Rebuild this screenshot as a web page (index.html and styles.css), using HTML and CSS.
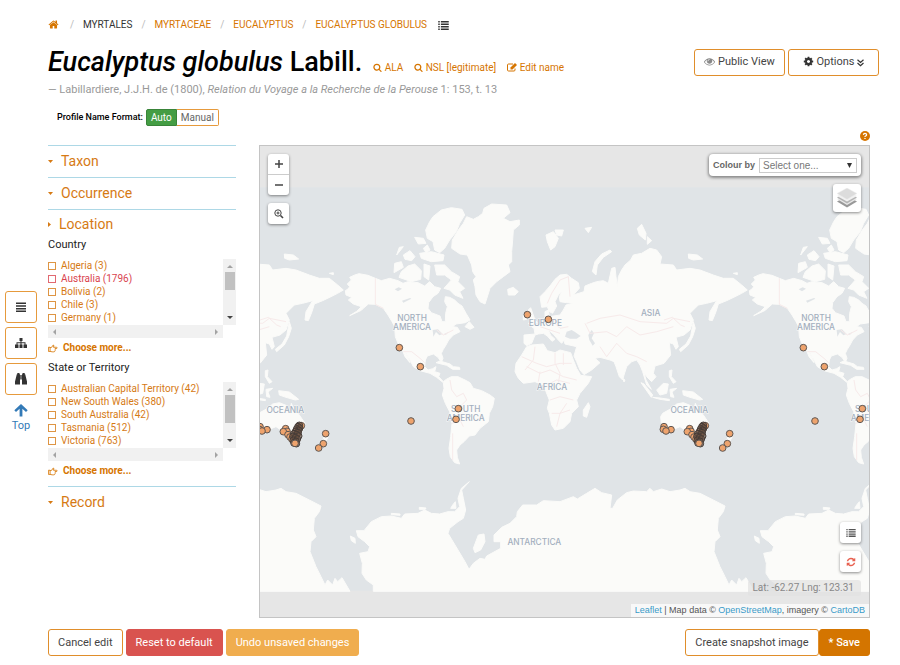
FILE: index.html
```
<!DOCTYPE html>
<html lang="en">
<head>
<meta charset="utf-8">
<title>Eucalyptus globulus Labill.</title>
<link rel="stylesheet" href="styles.css">
</head>
<body>
<svg class="defs" aria-hidden="true">
  <symbol id="i-search" viewBox="0 0 1792 1792"><path d="M1216 832q0-185-131.500-316.500t-316.500-131.500-316.500 131.500-131.500 316.500 131.500 316.500 316.500 131.500 316.500-131.500 131.500-316.500zm512 832q0 52-38 90t-90 38q-54 0-90-38l-343-342q-179 124-399 124-143 0-273.500-55.500t-225-150-150-225-55.500-273.500 55.500-273.500 150-225 225-150 273.500-55.500 273.500 55.500 225 150 150 225 55.500 273.500q0 220-124 399l343 343q37 37 37 90z"/></symbol>
  <symbol id="i-list" viewBox="0 0 14 12"><path d="M0 0h2v2H0zM3.500 0H14v2H3.500zM0 3.300h2v2H0zM3.500 3.300H14v2H3.500zM0 6.600h2v2H0zM3.500 6.600H14v2H3.500zM0 9.900h2v2H0zM3.500 9.900H14v2H3.500z"/></symbol>
  <symbol id="i-hand" viewBox="0 0 12 10"><path d="M.5 3.500h2v5h-2zM2.500 4 4.500 3.500 6 1q1.300-.3 1 1L6.500 3.500H10.500q1.200.8 0 1.500H8.500q1 .8 0 1.500 .6.800-.3 1.300 0 1.200-1.200 1.200H5L2.500 8.500" fill="none" stroke="currentColor"/></symbol>
</svg>
<div class="page">
  <aside class="rail">
    <button type="button" aria-label="Contents"><svg width="10" height="10" viewBox="0 0 10 10"><path d="M0 .5h10v1.500H0zM0 3.200h10v1.500H0zM0 5.900h10v1.500H0zM0 8.500h10V10H0z"/></svg></button>
    <button type="button" aria-label="Classification"><svg width="12" height="10" viewBox="0 0 12 10"><path d="M4.500 0h3v3h-1v1.300h4V6.500H12V10H8.500V6.500h1V5.300h-3v1.200h1V10h-3V6.500h1V5.300h-3v1.200h1V10H0V6.500h1.500V4.300h4V3h-1z"/></svg></button>
    <button type="button" aria-label="Find"><svg width="12" height="12" viewBox="0 0 12 12"><path d="M2.300 0h2.200v1.200H5V11.500H0V8.500L1.800 1.300h.5zM7.500 0h2.200v1.300h.5L12 8.500v3H7V1.200h.5zM5.300 2h1.400v4.500H5.300z"/></svg></button>
    <a class="top" href="#"><svg width="14" height="13" viewBox="0 0 14 13"><path d="M7 0 13.700 6.300 12 8 8.400 4.800V12.500H5.600V4.800L2 8 .3 6.300z"/></svg>Top</a>
  </aside>
  <main class="main">
    <nav class="crumbs" aria-label="Breadcrumb">
      <a class="home" href="#" aria-label="Home"><svg width="11" height="11" viewBox="0 0 1792 1792"><path d="M1472 992v480q0 26-19 45t-45 19h-384v-384h-256v384h-384q-26 0-45-19t-19-45v-480l576-477 575 474zm223-69l-62 74q-8 9-21 11h-3q-13 0-21-7l-692-577-692 577q-12 8-24 7-13-2-21-11l-62-74q-8-10-7-23.500t11-21.500l719-599q32-26 76-26t76 26l244 204v-195q0-14 9-23t23-9h192q14 0 23 9t9 23v408l219 182q10 8 11 21.500t-7 23.500z"/></svg></a>
      <i>/</i><span>MYRTALES</span><i>/</i><a href="#">MYRTACEAE</a><i>/</i><a href="#">EUCALYPTUS</a><i>/</i><a href="#">EUCALYPTUS GLOBULUS</a>
      <svg class="crumb-list" width="11" height="9"><use href="#i-list"/></svg>
    </nav>
    <header class="head">
      <div class="title">
        <h1><em>Eucalyptus globulus</em> Labill.</h1>
        <a href="#"><svg width="9" height="9"><use href="#i-search"/></svg> ALA</a>
        <a href="#"><svg width="9" height="9"><use href="#i-search"/></svg> NSL [legitimate]</a>
        <a href="#"><svg width="10" height="9" viewBox="0 0 10 9"><path d="M6 1H1.500Q.5 1 .5 2v5q0 1 1 1h5.500q1 0 1-1V5.500" fill="none" stroke="currentColor"/><path d="M3.500 6.500V4.500L8 0l2 2-4.500 4.500z"/></svg> Edit name</a>
      </div>
      <div class="actions">
        <button type="button" class="btn"><svg class="dim" width="11" height="11" viewBox="0 0 1792 1792"><path d="M1664 960q-152-236-381-353 61 104 61 225 0 185-131.500 316.500t-316.500 131.500-316.500-131.500-131.500-316.500q0-121 61-225-229 117-381 353 133 205 333.500 326.500t434.500 121.500 434.500-121.500 333.500-326.500zm-720-384q0-20-14-34t-34-14q-125 0-214.500 89.500t-89.500 214.500q0 20 14 34t34 14 34-14 14-34q0-86 61-147t147-61q20 0 34-14t14-34zm848 384q0 34-20 69-140 230-376.500 368.500t-499.500 138.500-499.500-139-376.500-368q-20-35-20-69t20-69q140-229 376.500-368t499.500-139 499.500 139 376.500 368q20 35 20 69z"/></svg> Public View</button>
        <button type="button" class="btn"><svg width="11" height="11" viewBox="0 0 1792 1792"><path d="M1152 896q0-106-75-181t-181-75-181 75-75 181 75 181 181 75 181-75 75-181zm512-109v222q0 12-8 23t-20 13l-185 28q-19 54-39 91 35 50 107 138 10 12 10 25t-9 23q-27 37-99 108t-94 71q-12 0-26-9l-138-108q-44 23-91 38-16 136-29 186-7 28-36 28h-222q-14 0-24.500-8.500t-11.500-21.500l-28-184q-49-16-90-37l-141 107q-10 9-25 9-14 0-25-11-126-114-165-168-7-10-7-23 0-12 8-23 15-21 51-66.500t54-70.500q-27-50-41-99l-183-27q-13-2-21-12.500t-8-23.500v-222q0-12 8-23t19-13l186-28q14-46 39-92-40-57-107-138-10-12-10-24 0-10 9-23 26-36 98.500-107.500t94.500-71.500q13 0 26 10l138 107q44-23 91-38 16-136 29-186 7-28 36-28h222q14 0 24.500 8.500t11.500 21.500l28 184q49 16 90 37l142-107q9-9 24-9 13 0 25 10 129 119 165 170 7 8 7 22 0 12-8 23-15 21-51 66.500t-54 70.500q26 50 41 98l183 28q13 2 21 12.500t8 23.500z"/></svg> Options <svg width="7" height="8" viewBox="0 0 7 8"><path d="M.5.800 3.500 3.500 6.500.800M.5 4 3.500 6.800 6.500 4" fill="none" stroke="currentColor" stroke-width="1.200"/></svg></button>
      </div>
    </header>
    <p class="cite">— Labillardiere, J.J.H. de (1800), <em>Relation du Voyage a la Recherche de la Perouse</em> 1: 153, t. 13</p>
    <div class="format"><span>Profile Name Format:</span><div class="toggle"><button type="button" class="on">Auto</button><button type="button">Manual</button></div></div>
    <div class="help"><svg width="10" height="10" viewBox="0 0 10 10"><circle cx="5" cy="5" r="5"/><path d="M3.400 3.900Q3.500 2.400 5 2.400T6.600 3.800Q6.600 4.500 5.700 5T5 6M5 6.900v1.200" fill="none" stroke="#fff" stroke-width="1.300"/></svg></div>
    <div class="body">
      <section class="facets">
        <h2><svg width="5" height="3" viewBox="0 0 5 3"><path d="M0 0h5L2.500 3z"/></svg>Taxon</h2>
        <h2><svg width="5" height="3" viewBox="0 0 5 3"><path d="M0 0h5L2.500 3z"/></svg>Occurrence</h2>
        <h2 class="open"><svg width="3" height="5" viewBox="0 0 3 5"><path d="M0 0v5l3-2.500z"/></svg>Location</h2>
        <h3>Country</h3>
        <div class="scroller">
          <div class="items">
            <label><input type="checkbox">Algeria (3)</label>
            <label class="hot"><input type="checkbox">Australia (1796)</label>
            <label><input type="checkbox">Bolivia (2)</label>
            <label><input type="checkbox">Chile (3)</label>
            <label><input type="checkbox">Germany (1)</label>
          </div>
          <div class="vbar"><svg class="up" width="6" height="3" viewBox="0 0 6 3"><path d="M0 3h6L3 0z"/></svg><b class="short"></b><svg class="down" width="6" height="3" viewBox="0 0 6 3"><path d="M0 0h6L3 3z"/></svg></div>
          <div class="hbar"><svg width="3" height="6" viewBox="0 0 3 6"><path d="M3 0v6L0 3z"/></svg><svg width="3" height="6" viewBox="0 0 3 6"><path d="M0 0v6l3-3z"/></svg></div>
        </div>
        <a class="more" href="#"><svg width="10" height="9"><use href="#i-hand"/></svg>Choose more...</a>
        <h3>State or Territory</h3>
        <div class="scroller">
          <div class="items">
            <label><input type="checkbox">Australian Capital Territory (42)</label>
            <label><input type="checkbox">New South Wales (380)</label>
            <label><input type="checkbox">South Australia (42)</label>
            <label><input type="checkbox">Tasmania (512)</label>
            <label><input type="checkbox">Victoria (763)</label>
          </div>
          <div class="vbar"><svg class="up" width="6" height="3" viewBox="0 0 6 3"><path d="M0 3h6L3 0z"/></svg><b></b><svg class="down" width="6" height="3" viewBox="0 0 6 3"><path d="M0 0h6L3 3z"/></svg></div>
          <div class="hbar"><svg width="3" height="6" viewBox="0 0 3 6"><path d="M3 0v6L0 3z"/></svg><svg width="3" height="6" viewBox="0 0 3 6"><path d="M0 0v6l3-3z"/></svg></div>
        </div>
        <a class="more" href="#"><svg width="10" height="9"><use href="#i-hand"/></svg>Choose more...</a>
        <h2 class="last"><svg width="5" height="3" viewBox="0 0 5 3"><path d="M0 0h5L2.500 3z"/></svg>Record</h2>
      </section>
      <section class="map" aria-label="Occurrence map">
        <svg class="world" viewBox="-600 -102 1827 1413" preserveAspectRatio="xMidYMid slice">
          <defs>
            <g id="land">
              <path d="M-344 332-336 327-331 320-338 312-326 300-331 292-316 285-303 281-276 286-254 295-236 302-211 295-186 302-171 310-156 305-126 308-106 318-91 305-76 320-58 325-66 340-81 350-94 368-96 385-86 398-60 408-54 425-44 425-43 400-38 380-46 365-44 350-31 352-16 360-6 370 6 378 18 400 30 420 16 428-12 432-22 440-8 442 0 455-20 465-34 480-42 495-50 508-56 520-51 535-56 547-66 532-80 522-98 528-104 540-106 560-96 570-82 566-72 560-76 575-60 580-64 590-50 605-41 598-26 590-6 590 15 600 30 608 40 625 65 632 90 645 103 655 98 680 88 700 85 725 60 745 45 765 28 768 12 785 0 795-10 810-8 832-1 852-16 848-29 830-33 805-28 770-24 730-31 695-44 670-53 645-48 625-50 608-70 592-90 580-120 572-140 560-150 540-162 520-166 514-155 535-150 548-165 530-172 512-182 500-194 470-196 440-204 425-216 405-230 385-254 373-275 372-290 385-296 391-331 407-310 394-296 380-320 372-335 360-325 352-342 345Z"/>
              <path d="M-56 90-26 83 6 88 14 105-1 130-11 155-31 180-46 205-61 218-76 210-81 185-98 175-103 150-91 125-81 110ZM-121 220-86 215-48 225-51 242-86 245-116 235ZM-136 172-110 175-102 190-125 192ZM-182 202-170 200-190 225ZM-170 225-150 212-135 230-145 242-165 238ZM-196 250-176 245-170 262-198 278ZM-176 275-156 258-136 252-116 272-118 298-146 305-183 292ZM-108 252-90 258-94 300-108 290ZM-110 205-98 195-90 210-102 218ZM-76 255-46 255-26 275-1 290-6 305 14 325-1 335 9 355-16 345-31 330-48 325-26 300-46 285-70 285Z"/>
              <path d="M-23 180-5 150 10 130 20 110 40 118 55 110 68 100 72 85 95 72 140 75 150 98 130 115 150 125 178 120 178 135 160 150 158 180 155 215 155 245 145 255 150 275 130 290 110 305 90 325 75 372 60 365 48 345 45 320 40 300 48 290 38 275 35 255 22 225 0 222-25 205ZM143 328 160 322 175 335 165 345 145 345ZM258 165 280 155 295 175 285 200 272 210 262 185ZM285 150 310 150 305 168 290 165ZM375 145 395 142 385 158ZM397 275 405 245 425 222 450 210 455 215 430 232 412 255 408 285ZM532 145 545 133 558 160 556 180 538 165ZM562 170 575 182 562 193ZM685 222 712 225 728 237 700 240 686 235ZM820 280 832 278 832 284ZM-72 548-60 543-30 552-20 560-2 562 0 568-22 568-40 556ZM15 440 28 425 42 442 30 448Z"/>
              <path d="M240 350 255 335 270 318 285 298 300 285 320 283 335 295 355 308 358 325 340 345 372 335 375 318 395 310 410 305 430 302 445 310 455 265 465 262 468 290 472 320 475 290 485 270 495 255 512 240 520 225 545 220 570 205 590 210 605 230 600 252 640 255 650 270 690 265 720 270 760 285 790 295 820 295 845 315 862 330 845 340 825 350 800 362 775 372 768 395 757 422 747 420 750 395 770 362 740 370 715 375 690 400 700 420 690 450 672 465 648 472 655 500 648 508 640 492 628 488 632 525 612 550 585 558 580 580 588 590 575 605 560 590 552 578 558 600 574 628 560 615 548 575 540 555 530 540 515 545 500 560 492 585 488 600 478 590 468 560 462 545 450 540 420 532 405 535 420 548 395 570 372 584 360 570 350 545 342 528 350 500 315 492 312 480 305 490 295 480 280 462 265 450 272 466 285 478 276 484 262 468 250 460 235 462 225 465 215 490 200 497 192 490 192 465 225 462 222 445 215 440 232 432 248 425 255 410 255 395 265 390 268 410 300 405 310 390 318 375 340 370 320 368 300 365 298 350 305 335 295 345 285 365 290 378 278 400 268 395 262 380 245 382Z"/>
              <path d="M205 430 216 424 205 405 205 390 212 383 218 400 225 420 232 428 215 434ZM190 405 203 400 200 418 190 420ZM200 500 215 495 250 492 262 512 285 518 300 510 332 518 340 540 350 565 362 586 395 590 385 610 360 640 350 660 355 680 335 700 330 725 310 745 285 750 275 735 268 700 262 685 268 660 258 635 250 615 225 605 190 610 175 595 165 575 168 550 185 525ZM385 668 390 680 380 712 370 708 370 690ZM489 596 495 600 492 606ZM543 608 552 612 578 645 574 652ZM578 652 600 654 628 658 628 662 600 658ZM590 630 610 610 625 612 620 640 600 645ZM630 628 650 625 636 636 642 652 632 650ZM628 572 636 570 634 590 648 605 640 610 628 590ZM668 632 700 636 728 658 718 660 690 652 670 645ZM700 425 706 445 698 470 685 495 662 515 658 508 678 492 692 468ZM602 710 608 700 635 685 650 672 670 668 690 676 688 690 702 694 706 670 714 688 730 705 747 730 740 752 725 782 705 775 695 755 675 750 660 740 635 750 608 752 604 730ZM712 790 722 790 717 800ZM806 758 817 770 807 788 800 786ZM798 792 804 794 790 808 784 804Z"/>
              <path d="M-260 1234V1215L-281 1200-294 1180-293 1150-301 1120-276 1115-271 1100-286 1085-306 1070-311 1052-288 1052-266 1025-236 1010-206 1008-176 1015-166 1002-126 1000-106 990-86 1000-61 1002-36 995-16 995-1 980-6 955 4 925 28 905 5 930 10 955 17 990 10 1015-6 1025-31 1045-36 1060-6 1110 15 1145 27 1168 40 1150 60 1135 75 1138 80 1128 122 1105 122 1085 102 1085 102 1065 125 1042 150 1030 170 1010 172 995 188 975 230 975 250 962 300 965 340 950 352 957 380 940 405 925 425 938 455 945 450 985 458 985 472 960 500 938 520 933 560 935 570 925 580 935 605 927 630 935 660 930 675 925 690 935 720 940 760 960 795 978 790 995 775 1015 772 1050 780 1070 765 1085 762 1115 780 1160 795 1190 807 1215 815 1200 830 1215 837 1195 845 1205 858 1193 882 1234ZM-329 1068-315 1075-314 1090-326 1082ZM40 1105 55 1065 72 1062 75 1085 62 1110 45 1118ZM-122 982-102 984-104 988-122 988ZM-206 1000-180 1002-180 1006-206 1004ZM-22 975-14 965-12 985-28 985Z"/>
              <g class="lakes"><path d="M315 470 320 455 335 450 345 456 362 468 350 476 330 476ZM385 465 395 450 402 460 395 475 405 490 398 497 388 480ZM-196 328-184 322-174 326-186 334ZM-174 362-150 354-146 356-170 368ZM-82 450-66 448-52 462-62 466-72 456-80 470ZM-48 462-34 456-42 464Z"/></g>
              <path class="borders" d="M-254 295V373L-230 385M-170 515H-145L-120 535-106 548M-70 450-50 465-20 450M-600 420-575 412-550 435-538 440M-30 600-25 630-10 650 10 640 20 660 0 680M-24 730 0 720 10 740M-22 760V840M262 370 275 340 300 300 325 290 330 350M268 410 285 430 300 445 325 440M240 440 270 450 300 460M380 430 420 415 480 405 540 425 620 430 640 415 690 425M375 430 390 460 440 455 470 470 500 440 540 465 590 455 640 440M420 500 440 530 470 490 500 520 530 530 560 545M185 530 230 550 260 560 300 550 335 550M200 560 240 580 270 570 310 590 350 600M225 500 220 540 195 570M285 518V550L300 580 295 610M235 605 240 575M260 615 290 600 330 610M270 660 300 650 340 660M290 740 300 700 330 690M275 700H300L320 670M310 520V555"/>
            </g>
            <g id="names" class="names"><text x="-144" y="424">NORTH</text><text x="-144" y="451">AMERICA</text><text x="17" y="695">SOUTH</text><text x="17" y="723">AMERICA</text><text x="256" y="437">EUROPE</text><text x="572" y="409">ASIA</text><text x="276" y="630">AFRICA</text><text x="688" y="700">OCEANIA</text><text x="223" y="1095">ANTARCTICA</text></g>
            <g id="pins" class="pins"><circle cx="-182" cy="503" r="10"/><circle cx="-119" cy="560" r="10"/><circle cx="-5" cy="686" r="10"/><circle cx="-12" cy="718" r="10"/><circle cx="-147" cy="723" r="10"/><circle cx="202" cy="404" r="10"/><circle cx="265" cy="418" r="10"/><circle cx="809" cy="761" r="10"/><circle cx="802" cy="791" r="10"/><circle cx="788" cy="804" r="10"/><circle cx="612" cy="740" r="10"/><circle cx="633" cy="749" r="10"/><circle cx="610" cy="748" r="10"/><circle cx="618" cy="753" r="10"/><circle cx="736" cy="737" r="10"/><circle cx="689" cy="746" r="10"/><circle cx="693" cy="754" r="10"/><circle cx="682" cy="755" r="10"/><circle cx="696" cy="764" r="10"/><circle cx="702" cy="771" r="10"/><circle cx="708" cy="778" r="10"/>
              <g class="dense"><circle cx="730" cy="736" r="10"/><circle cx="726" cy="740" r="10"/><circle cx="731" cy="744" r="10"/><circle cx="722" cy="747" r="10"/><circle cx="728" cy="751" r="10"/><circle cx="719" cy="754" r="10"/><circle cx="726" cy="758" r="10"/><circle cx="714" cy="761" r="10"/><circle cx="722" cy="764" r="10"/><circle cx="728" cy="768" r="10"/><circle cx="711" cy="769" r="10"/><circle cx="718" cy="773" r="10"/><circle cx="724" cy="777" r="10"/><circle cx="712" cy="781" r="10"/><circle cx="720" cy="784" r="10"/><circle cx="714" cy="789" r="10"/><circle cx="721" cy="791" r="10"/></g><circle cx="717" cy="790" r="10"/></g>
          </defs>
          <rect class="sea" x="-2400" y="22" width="5400" height="1210"/>
          <g class="land"><use href="#land" x="-1212"/><use href="#land"/><use href="#land" x="1212"/></g>
          <use href="#names" x="-1212"/><use href="#names"/><use href="#names" x="1212"/>
          <use href="#pins" x="-1212"/><use href="#pins"/><use href="#pins" x="1212"/>
        </svg>
        <div class="corner top-left">
          <div class="box zoom"><button type="button" aria-label="Zoom in"><svg width="8" height="8" viewBox="0 0 8 8"><path d="M0 4h8M4 0v8" stroke="#444" stroke-width="1.500"/></svg></button><button type="button" aria-label="Zoom out"><svg width="8" height="8" viewBox="0 0 8 8"><path d="M0 4h8" stroke="#444" stroke-width="1.500"/></svg></button></div>
          <button type="button" class="box" aria-label="Zoom to points"><svg width="10" height="10" viewBox="0 0 10 10"><g fill="none" stroke="#444"><circle cx="4" cy="4" r="3.200"/><path d="M2.500 4h3M4 2.500v3"/><path d="M6.500 6.500 9 9" stroke-width="1.600"/></g></svg></button>
        </div>
        <div class="corner top-right">
          <div class="colour"><label for="colour">Colour by</label><div class="select"><select id="colour"><option>Select one...</option></select><svg width="5" height="5" viewBox="0 0 5 5"><path d="M0 0h5L2.500 5z"/></svg></div></div>
          <button type="button" class="box layers" aria-label="Layers"><svg width="22" height="20" viewBox="0 0 22 20"><path d="M11 8 21 13.500 11 19.500 1 13.500z" fill="#999"/><path d="M11 5.500 21 11 11 17 1 11z" fill="#e8e8e8"/><path d="M11 4 21 9.500 11 15.500 1 9.500z" fill="#b5b5b5"/><path d="M11 2.500 21 8 11 13.500 1 8z" fill="#f1f1f1"/><path d="M11 0 21 5.500 11 11.500 1 5.500z" fill="#dcdcdc" stroke="#eee" stroke-width=".5"/></svg></button>
        </div>
        <div class="corner bottom-right">
          <button type="button" class="box legend" aria-label="Legend"><svg width="10" height="8"><use href="#i-list"/></svg></button>
          <button type="button" class="box refresh" aria-label="Refresh"><svg width="10" height="10" viewBox="0 0 1792 1792"><path d="M1639 1056q0 5-1 7-64 268-268 434.500t-478 166.500q-146 0-282.500-55t-243.500-157l-129 129q-19 19-45 19t-45-19-19-45v-448q0-26 19-45t45-19h448q26 0 45 19t19 45-19 45l-137 137q71 66 161 102t187 36q134 0 250-65t186-179q11-17 53-117 8-23 30-23h192q13 0 22.500 9.500t9.500 22.500zm25-800v448q0 26-19 45t-45 19h-448q-26 0-45-19t-19-45 19-45l138-138q-148-137-349-137-134 0-250 65t-186 179q-11 17-53 117-8 23-30 23h-199q-13 0-22.500-9.500t-9.500-22.500v-7q65-268 270-434.500t480-166.500q146 0 284 55.500t245 156.500l130-129q19-19 45-19t45 19 19 45z"/></svg></button>
          <div class="coords">Lat: -62.27 Lng: 123.31</div>
        </div>
        <div class="credit"><a href="#">Leaflet</a> | Map data © <a href="#">OpenStreetMap</a>, imagery © <a href="#">CartoDB</a></div>
      </section>
    </div>
    <footer class="foot">
      <button type="button" class="btn">Cancel edit</button>
      <button type="button" class="btn red">Reset to default</button>
      <button type="button" class="btn amber">Undo unsaved changes</button>
      <div class="group"><button type="button" class="btn">Create snapshot image</button><button type="button" class="btn save">* Save</button></div>
    </footer>
  </main>
</div>
</body>
</html>
```
FILE: styles.css
```
* { box-sizing: border-box; }
body { margin: 0; background: #fff; color: #333; font: 11px/16px Roboto, "Liberation Sans", sans-serif; }
svg { fill: currentColor; flex: none; }
a { color: #d67500; text-decoration: none; }
button { font: inherit; color: inherit; padding: 0; cursor: pointer; }
h1, h2, h3, p { margin: 0; font-weight: 400; }
.defs { position: absolute; width: 0; height: 0; }
.page { display: flex; }

.rail { width: 48px; padding: 291px 0 0 5px; display: flex; flex-direction: column; gap: 4px; flex: none; }
.rail button { width: 32px; height: 32px; display: flex; align-items: center; justify-content: center; background: #fff; border: 1px solid #e69a3c; border-radius: 3px; }
.top { width: 32px; padding-top: 5px; display: flex; flex-direction: column; align-items: center; color: #337ab7; line-height: 18px; }

.main { flex: 1; min-width: 0; padding: 16px 21px 8px 0; }
.crumbs { display: flex; align-items: center; height: 18px; font-size: 10px; }
.crumbs a { display: flex; }
.crumbs .home { padding: 0 2px 1px 0; }
.crumbs i { width: 22px; text-align: center; font-style: normal; color: #bbb; }
.crumb-list { margin-left: 11px; }
.head { display: flex; justify-content: space-between; align-items: center; height: 48px; margin-top: 4px; }
.title { display: flex; align-items: baseline; gap: 11px; font-size: 10px; }
h1 { font-size: 27px; line-height: 32px; font-weight: 500; color: #000; }
.title a svg { vertical-align: -1px; }
.actions { display: flex; gap: 3px; }
.actions .btn { width: 91px; }
.btn { height: 27px; padding: 0 9px; background: #fff; border: 1px solid #e08e2b; border-radius: 3px; white-space: nowrap; color: #444; }
.btn svg { vertical-align: -2px; color: #333; }
.btn .dim { color: #888; }
.cite { margin-top: -4px; color: #999; }
.format { display: flex; align-items: center; gap: 3px; height: 18px; margin: 10px 0 0 9px; font-size: 9px; color: #000; font-weight: 500; }
.toggle { display: flex; font-size: 10px; font-weight: 400; color: #666; }
.toggle button { height: 17px; padding: 0 4px; border: 1px solid #e69a3c; border-left: 0; border-radius: 0 2px 2px 0; background: #fff; }
.toggle .on { border: 1px solid #398439; border-radius: 2px 0 0 2px; background: #449d44; color: #fff; }
.help { display: flex; justify-content: flex-end; height: 19px; padding: 5px 9px 0 0; color: #d67500; }

.body { display: flex; gap: 23px; padding-right: 9px; }
.facets { width: 188px; flex: none; }
h2 { display: flex; align-items: center; gap: 8px; height: 32px; padding-bottom: 1px; border-top: 1px solid #add8e6; font-size: 14px; color: #d67a14; }
h2.open { height: 30px; }
h2.last { margin-top: 5px; }
h3 { height: 20px; font-size: 11px; line-height: 12px; color: #222; }
.scroller { display: grid; grid-template-columns: 1fr 13px; }
.items { height: 66px; font-size: 10px; line-height: 13px; color: #d67a14; }
.items label { display: flex; align-items: center; gap: 5px; height: 13px; white-space: nowrap; }
.items .hot { color: #d9434e; }
.items input { appearance: none; width: 8px; height: 8px; margin: 0; border: 1px solid; color: inherit; opacity: .8; }
.vbar { display: flex; flex-direction: column; align-items: center; gap: 4px; background: #f1f1f1; padding: 6px 0 6px; }
.vbar b { width: 10px; height: 28px; background: #c1c1c1; }
.vbar .short { height: 18px; }
.vbar .up { color: #a3a3a3; }
.vbar .down { margin-top: auto; color: #444; }
.hbar { display: flex; justify-content: space-between; align-items: center; height: 13px; padding: 0 5px; background: #f1f1f1; color: #a3a3a3; }
.more { display: flex; align-items: center; gap: 5px; height: 20px; font-size: 10px; font-weight: 700; color: #d67500; }
.more + h3 { padding-top: 4px; height: 24px; }

.map { position: relative; flex: 1; min-width: 0; height: 473px; border: 1px solid #c4c4c4; background: #e6e6e6; overflow: hidden; }
.world { display: block; width: 100%; height: 100%; }
.sea, .lakes { fill: #e0e4e7; }
.land { fill: #fbfbf9; stroke: #fbfbf9; stroke-width: 3; stroke-linejoin: round; }
.lakes { stroke: none; }
.borders { fill: none; stroke: #f7eaea; stroke-width: 3; }
.names { font: 500 25px Inter, "Liberation Sans", sans-serif; fill: #a3afbe; text-anchor: middle; stroke: #fbfbf9; stroke-width: 3; paint-order: stroke; }
.pins { fill: #eea36d; stroke: #5f5753; stroke-width: 3; }
.dense { fill: #6b5040; stroke: #453c38; fill-opacity: .6; }
.corner { position: absolute; display: flex; flex-direction: column; }
.box { width: 21px; height: 21px; display: flex; align-items: center; justify-content: center; border: 0; border-radius: 3px; background: #fff; box-shadow: 0 1px 3px rgba(0, 0, 0, .45); }
.top-left { top: 8px; left: 8px; gap: 8px; }
.zoom { height: 41px; flex-direction: column; align-items: stretch; }
.zoom button { flex: 1; display: flex; align-items: center; justify-content: center; border: 0; background: none; }
.zoom button + button { border-top: 1px solid #ccc; }
.top-right { top: 8px; right: 8px; gap: 8px; align-items: flex-end; }
.colour { display: flex; align-items: center; gap: 4px; height: 22px; padding: 0 4px; border-radius: 4px; background: #fff; box-shadow: 0 1px 3px 1px rgba(0, 0, 0, .4); font: 700 9px "Liberation Sans", sans-serif; color: #666; }
.select { position: relative; }
.select select { appearance: none; display: block; width: 98px; height: 15px; padding: 0 3px; border: 1px solid #ccc; border-radius: 0; background: #fff; font: 10px "Liberation Sans", sans-serif; color: #777; }
.select svg { position: absolute; right: 5px; top: 5px; color: #333; pointer-events: none; }
.layers { width: 28px; height: 28px; }
.legend { color: #555; }
.refresh { color: #e8604f; }
.bottom-right { right: 8px; bottom: 21px; gap: 8px; align-items: flex-end; }
.coords { height: 16px; padding: 0 7px 0 4px; border-radius: 3px; background: rgba(225, 225, 225, .7); color: #888; font-size: 10px; }
.credit { position: absolute; right: 0; bottom: 0; height: 13px; padding: 0 4px; background: rgba(255, 255, 255, .7); font: 9px/13px "Liberation Sans", sans-serif; color: #555; white-space: nowrap; }
.credit a { color: #3a9bc8; }

.foot { display: flex; gap: 3px; margin-top: 11px; padding-right: 9px; }
.foot .red { background: #d9534f; border-color: #d9534f; color: #fff; }
.foot .amber { background: #f0ad4e; border-color: #f0ad4e; color: #fff; }
.group { display: flex; margin-left: auto; }
.foot .save { background: #d47500; border-color: #d47500; color: #fff; font-weight: 500; }
```
